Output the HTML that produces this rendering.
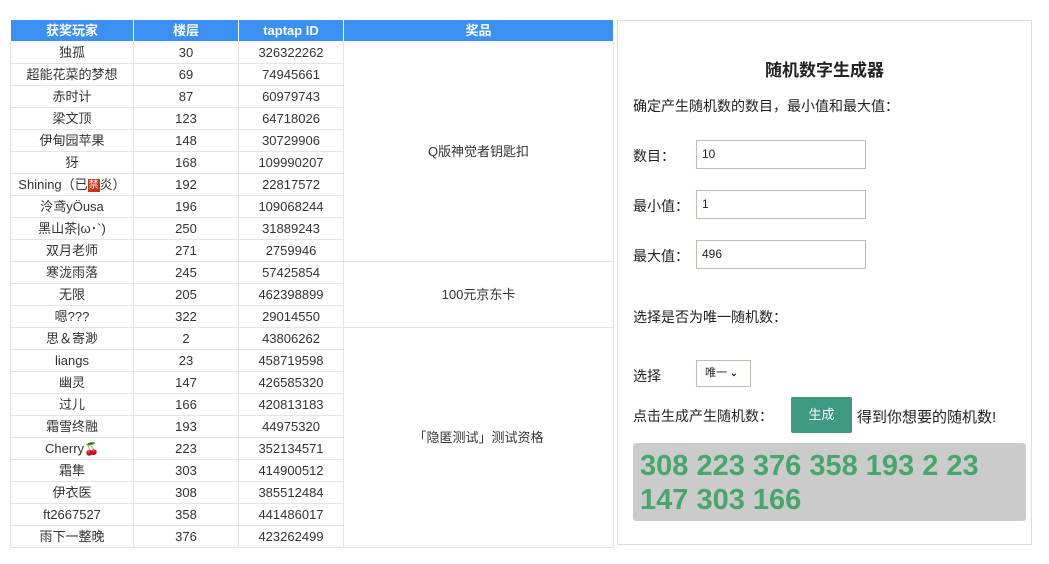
<!DOCTYPE html>
<html><head><meta charset="utf-8"><style>
body{margin:0;width:1049px;height:564px;background:#fff;font-family:"Liberation Sans","Noto Sans CJK SC",sans-serif;color:#333;position:relative;overflow:hidden}
table{position:absolute;left:10px;top:19px;border-collapse:collapse;font-size:13px}
td,th{border:1px solid #e4e4e4;text-align:center;padding:0;height:21px;line-height:21px;white-space:nowrap;overflow:hidden}
th{background:#3a90f5;color:#fff;font-weight:bold;border-color:#fff;height:20px}
.p{position:absolute}
.box{left:617px;top:20px;width:413px;height:523px;border:1px solid #ddd}
.in{position:absolute;left:696px;border:1px solid #c9b8ad;font-size:12px;line-height:27px;padding-left:5px;box-sizing:border-box;width:170px;height:29px;color:#222}
.t{font-size:14px;color:#222}
.ban{display:inline-block;background:#c8361a;color:#fff;font-size:10px;line-height:13px;height:13px;padding:0 1px;vertical-align:middle}
</style></head><body>
<table>
<tr><th style="width:122px">获奖玩家</th><th style="width:104px">楼层</th><th style="width:104px">taptap ID</th><th style="width:269px">奖品</th></tr>
<tr><td>独孤</td><td>30</td><td>326322262</td><td rowspan="10">Q版神觉者钥匙扣</td></tr>
<tr><td>超能花菜的梦想</td><td>69</td><td>74945661</td></tr>
<tr><td>赤时计</td><td>87</td><td>60979743</td></tr>
<tr><td>梁文顶</td><td>123</td><td>64718026</td></tr>
<tr><td>伊甸园苹果</td><td>148</td><td>30729906</td></tr>
<tr><td>犽</td><td>168</td><td>109990207</td></tr>
<tr><td>Shining（已<span class="ban">禁</span>炎）</td><td>192</td><td>22817572</td></tr>
<tr><td>泠鸢yÖusa</td><td>196</td><td>109068244</td></tr>
<tr><td>黑山茶|ω･`)</td><td>250</td><td>31889243</td></tr>
<tr><td>双月老师</td><td>271</td><td>2759946</td></tr>
<tr><td>寒泷雨落</td><td>245</td><td>57425854</td><td rowspan="3">100元京东卡</td></tr>
<tr><td>无限</td><td>205</td><td>462398899</td></tr>
<tr><td>嗯???</td><td>322</td><td>29014550</td></tr>
<tr><td>思＆寄渺</td><td>2</td><td>43806262</td><td rowspan="10">「隐匿测试」测试资格</td></tr>
<tr><td>liangs</td><td>23</td><td>458719598</td></tr>
<tr><td>幽灵</td><td>147</td><td>426585320</td></tr>
<tr><td>过儿</td><td>166</td><td>420813183</td></tr>
<tr><td>霜雪终融</td><td>193</td><td>44975320</td></tr>
<tr><td>Cherry<span style="color:#c22;font-size:12px;line-height:12px">🍒</span></td><td>223</td><td>352134571</td></tr>
<tr><td>霜隼</td><td>303</td><td>414900512</td></tr>
<tr><td>伊衣医</td><td>308</td><td>385512484</td></tr>
<tr><td>ft2667527</td><td>358</td><td>441486017</td></tr>
<tr><td>雨下一整晚</td><td>376</td><td>423262499</td></tr>
</table>
<div class="p box"></div>
<div class="p" style="left:617px;width:415px;top:56px;text-align:center;font-size:17px;font-weight:bold;color:#222">随机数字生成器</div>
<div class="p t" style="left:633px;top:96px">确定产生随机数的数目，最小值和最大值：</div>
<div class="p t" style="left:633px;top:146px">数目：</div><div class="in" style="top:140px">10</div>
<div class="p t" style="left:633px;top:196px">最小值：</div><div class="in" style="top:190px">1</div>
<div class="p t" style="left:633px;top:246px">最大值：</div><div class="in" style="top:240px">496</div>
<div class="p t" style="left:633px;top:307px">选择是否为唯一随机数：</div>
<div class="p t" style="left:633px;top:366px">选择</div>
<div class="p" style="left:696px;top:360px;width:55px;height:27px;border:1px solid #c9b8ad;box-sizing:border-box;font-size:11px;line-height:25px;padding-left:8px;color:#222">唯一 <span style="font-size:9px;font-weight:bold">⌄</span></div>
<div class="p t" style="left:633px;top:406px">点击生成产生随机数：</div>
<div class="p" style="left:791px;top:397px;width:61px;height:36px;background:#3f9a82;color:#fff;font-size:13px;line-height:36px;text-align:center;border-radius:2px">生成</div>
<div class="p t" style="left:857px;top:406px;font-size:15px">得到你想要的随机数!</div>
<div class="p" style="left:633px;top:443px;width:393px;height:78px;background:#cbcbcb;border-radius:3px"></div>
<div class="p" style="left:640px;top:449px;width:385px;color:#47a76b;font-size:29px;font-weight:bold;line-height:34px;white-space:nowrap">308 223 376 358 193 2 23<br>147 303 166</div>
</body></html>
